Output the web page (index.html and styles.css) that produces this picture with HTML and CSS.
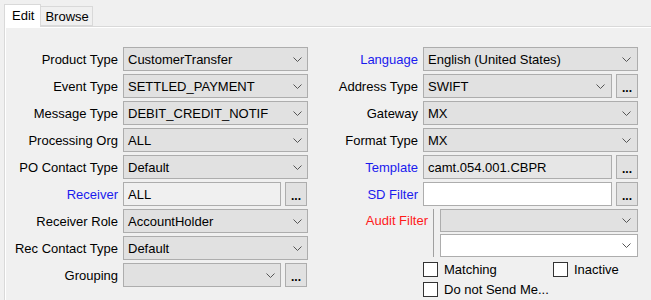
FILE: index.html
```html
<!DOCTYPE html>
<html lang="en">
<head>
<meta charset="utf-8">
<title>Message Config</title>
<link rel="stylesheet" href="styles.css">
</head>
<body>

<div class="tabs">
  <div class="tab on">Edit</div>
  <div class="tab">Browse</div>
</div>

<div class="pane">
<div class="inner">

  <!-- left column -->
  <div class="col left">
    <div class="row"><span class="lbl">Product Type</span>
      <div class="combo"><span>CustomerTransfer</span><svg class="chev" width="9" height="5" viewBox="0 0 9 5"><polyline points="0.5,0.5 4.5,4.5 8.5,0.5"/></svg></div></div>
    <div class="row"><span class="lbl">Event Type</span>
      <div class="combo"><span>SETTLED_PAYMENT</span><svg class="chev" width="9" height="5" viewBox="0 0 9 5"><polyline points="0.5,0.5 4.5,4.5 8.5,0.5"/></svg></div></div>
    <div class="row"><span class="lbl">Message Type</span>
      <div class="combo"><span>DEBIT_CREDIT_NOTIF</span><svg class="chev" width="9" height="5" viewBox="0 0 9 5"><polyline points="0.5,0.5 4.5,4.5 8.5,0.5"/></svg></div></div>
    <div class="row"><span class="lbl">Processing Org</span>
      <div class="combo"><span>ALL</span><svg class="chev" width="9" height="5" viewBox="0 0 9 5"><polyline points="0.5,0.5 4.5,4.5 8.5,0.5"/></svg></div></div>
    <div class="row"><span class="lbl">PO Contact Type</span>
      <div class="combo"><span>Default</span><svg class="chev" width="9" height="5" viewBox="0 0 9 5"><polyline points="0.5,0.5 4.5,4.5 8.5,0.5"/></svg></div></div>
    <div class="row"><span class="lbl blue">Receiver</span>
      <div class="field short ro">ALL</div><div class="dots">...</div></div>
    <div class="row"><span class="lbl">Receiver Role</span>
      <div class="combo"><span>AccountHolder</span><svg class="chev" width="9" height="5" viewBox="0 0 9 5"><polyline points="0.5,0.5 4.5,4.5 8.5,0.5"/></svg></div></div>
    <div class="row"><span class="lbl">Rec Contact Type</span>
      <div class="combo"><span>Default</span><svg class="chev" width="9" height="5" viewBox="0 0 9 5"><polyline points="0.5,0.5 4.5,4.5 8.5,0.5"/></svg></div></div>
    <div class="row"><span class="lbl">Grouping</span>
      <div class="combo short"><span></span><svg class="chev" width="9" height="5" viewBox="0 0 9 5"><polyline points="0.5,0.5 4.5,4.5 8.5,0.5"/></svg></div><div class="dots">...</div></div>
  </div>

  <!-- right column -->
  <div class="col right">
    <div class="row"><span class="lbl blue">Language</span>
      <div class="combo"><span>English (United States)</span><svg class="chev" width="9" height="5" viewBox="0 0 9 5"><polyline points="0.5,0.5 4.5,4.5 8.5,0.5"/></svg></div></div>
    <div class="row"><span class="lbl">Address Type</span>
      <div class="combo short"><span>SWIFT</span><svg class="chev" width="9" height="5" viewBox="0 0 9 5"><polyline points="0.5,0.5 4.5,4.5 8.5,0.5"/></svg></div><div class="dots">...</div></div>
    <div class="row"><span class="lbl">Gateway</span>
      <div class="combo"><span>MX</span><svg class="chev" width="9" height="5" viewBox="0 0 9 5"><polyline points="0.5,0.5 4.5,4.5 8.5,0.5"/></svg></div></div>
    <div class="row"><span class="lbl">Format Type</span>
      <div class="combo"><span>MX</span><svg class="chev" width="9" height="5" viewBox="0 0 9 5"><polyline points="0.5,0.5 4.5,4.5 8.5,0.5"/></svg></div></div>
    <div class="row"><span class="lbl blue">Template</span>
      <div class="field short gray">camt.054.001.CBPR</div><div class="dots">...</div></div>
    <div class="row"><span class="lbl blue">SD Filter</span>
      <div class="field short"></div><div class="dots">...</div></div>

    <div class="audit">
      <span class="lbl red">Audit Filter</span>
      <div class="abox">
        <div class="combo"><span></span><svg class="chev" width="9" height="5" viewBox="0 0 9 5"><polyline points="0.5,0.5 4.5,4.5 8.5,0.5"/></svg></div>
        <div class="combo white"><span></span><svg class="chev" width="9" height="5" viewBox="0 0 9 5"><polyline points="0.5,0.5 4.5,4.5 8.5,0.5"/></svg></div>
      </div>
    </div>

    <div class="checks">
      <div class="crow">
        <label class="chk wide"><span class="box"></span>Matching</label>
        <label class="chk"><span class="box"></span>Inactive</label>
      </div>
      <div class="crow">
        <label class="chk"><span class="box"></span>Do not Send Me...</label>
      </div>
    </div>
  </div>

</div>
</div>

</body>
</html>
```

FILE: styles.css
```css
html { overflow: hidden; }
body {
  margin: 0;
  background: #f0f0f0;
  font-family: "Liberation Sans", Arial, sans-serif;
  font-size: 13px;
  color: #000;
  overflow: hidden;
  height: 300px;
}

/* tab strip */
.tabs { display: flex; align-items: flex-start; padding: 4px 0 0 4px; height: 22px; }
.tab {
  box-sizing: border-box;
  height: 20px;
  margin-top: 2px;
  margin-left: -1px;
  padding: 0 3px 0 4px;
  border: 1px solid #d9d9d9;
  background: #f0f0f0;
  line-height: 19px;
}
.tab.on {
  position: relative;
  z-index: 1;
  height: 23px;
  margin: 0;
  padding: 0 6px 0 7px;
  background: #fff;
  border-bottom: none;
  line-height: 22px;
}

.pane { margin-left: 4px; border-top: 1px solid #d9d9d9; border-left: 1px solid #d9d9d9; }
.inner {
  box-sizing: border-box;
  display: flex;
  gap: 5px;
  height: 273px;
  padding-top: 19px;
  border-top: 1px solid #fff;
  border-left: 1px solid #fff;
}

.col { display: flex; flex-direction: column; gap: 3px; }
.row { display: flex; align-items: center; gap: 4px; height: 24px; }
.lbl { text-align: right; white-space: nowrap; margin-right: 1px; }
.left .lbl { width: 112px; }
.right .lbl { width: 105px; }
.blue { color: #1a1aee; }
.red { color: #ff1a1a; }

/* combo boxes and fields */
.combo, .field {
  box-sizing: border-box;
  height: 24px;
  border: 1px solid #adadad;
  background: #e1e1e1;
  padding: 0 5px 0 4px;
  display: flex;
  align-items: center;
  justify-content: space-between;
  white-space: nowrap;
}
.left .combo, .left .field { width: 185px; }
.right .combo, .right .field { width: 215px; padding-right: 6px; }
.left .short { width: 158px; }
.right .short { width: 189px; }
.field { background: #fff; }
.field.ro { background: #f0f0f0; }
.field.gray { background: #e6e6e6; }
.chev polyline { fill: none; stroke: #555; stroke-width: 1; }

.dots {
  box-sizing: border-box;
  width: 22px;
  height: 24px;
  border: 1px solid #adadad;
  background: #e1e1e1;
  font-weight: bold;
  font-size: 12px;
  text-align: center;
  line-height: 24px;
  padding-top: 1px;
}

/* audit filter block */
.audit { display: flex; align-items: flex-start; }
.audit .lbl { width: 115px; line-height: 23px; margin-right: 5px; }
.abox {
  box-sizing: border-box;
  width: 205px;
  height: 48px;
  overflow: hidden;
  border-left: 1px solid #a0a0a0;
  padding-left: 6px;
  display: flex;
  flex-direction: column;
  gap: 2px;
}
.right .abox .combo { width: 198px; height: 23px; }
.right .abox .combo.white { height: 24px; background: #fff; }

/* check boxes */
.checks { margin: 2px 0 0 110px; display: flex; flex-direction: column; gap: 5px; }
.crow { display: flex; height: 15px; }
.chk { display: flex; align-items: center; gap: 6px; white-space: nowrap; }
.chk.wide { width: 130px; }
.box { box-sizing: border-box; width: 15px; height: 15px; border: 1px solid #333; background: #fff; }
```
